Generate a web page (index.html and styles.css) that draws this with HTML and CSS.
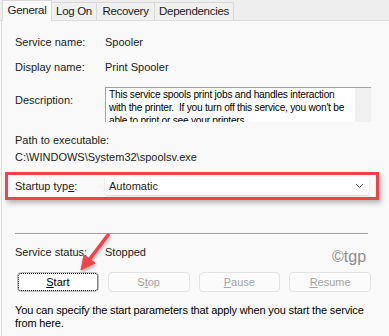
FILE: index.html
```html
<!DOCTYPE html>
<html lang="en">

<head>
    <meta charset="UTF-8">
    <meta name="viewport" content="width=device-width, initial-scale=1.0">
    <title>Print Spooler Properties</title>
    <link rel="stylesheet" href="styles.css">
</head>

<body>

    <div class="tabs">
        <div class="tab active">General</div>
        <div class="tab">Log On</div>
        <div class="tab">Recovery</div>
        <div class="tab">Dependencies</div>
    </div>

    <div class="panel">
        <div class="row first">
            <span class="label">Service name:</span>
            <span class="value">Spooler</span>
        </div>
        <div class="row gap">
            <span class="label">Display name:</span>
            <span class="value">Print Spooler</span>
        </div>
        <div class="row desc-row">
            <span class="label desc-label">Description:</span>
            <div class="desc-box">
                <div class="desc-text">This service spools print jobs and handles interaction with the printer.&nbsp; If you turn off this service, you won't be able to print or see your printers.</div>
                <div class="scroll"></div>
            </div>
        </div>
        <div class="path-label">Path to executable:</div>
        <div class="path-value">C:\WINDOWS\System32\spoolsv.exe</div>

        <div class="highlight">
            <span class="label">Startup typ<u>e</u>:</span>
            <div class="select">
                <span>Automatic</span>
                <svg class="chevron" width="9" height="6" viewBox="0 0 9 6">
                    <path d="M1 1 L4.5 4.5 L8 1" fill="none" stroke="#555" stroke-width="1"/>
                </svg>
            </div>
        </div>

        <div class="divider"></div>

        <div class="row status-row">
            <span class="label">Service status:</span>
            <span class="value">Stopped</span>
        </div>

        <div class="buttons">
            <button class="btn default"><u>S</u>tart</button>
            <button class="btn" disabled>S<u>t</u>op</button>
            <button class="btn" disabled><u>P</u>ause</button>
            <button class="btn" disabled><u>R</u>esume</button>
        </div>

        <p class="hint">You can specify the start parameters that apply when you start the service from here.</p>
    </div>

    <div class="watermark">©tgp</div>

    <svg class="arrow" width="389" height="336" viewBox="0 0 389 336">
        <g fill="#ee4449" stroke="#ee4449">
            <line x1="108" y1="235" x2="89" y2="260" stroke-width="3.5" stroke-linecap="round"/>
            <polygon points="81,270 95,263 84,255" stroke-width="1" stroke-linejoin="round"/>
        </g>
    </svg>

</body>

</html>
```

FILE: styles.css
```css
* {
    margin: 0;
    padding: 0;
    box-sizing: border-box;
}

body {
    background: #f9f9f9;
    color: #1b1b1b;
    font-family: 'Liberation Sans', Arial, sans-serif;
    font-size: 11px;
    line-height: 13px;
    width: 389px;
    height: 336px;
    overflow: hidden;
    position: relative;
}

.tabs {
    display: flex;
    align-items: flex-end;
    height: 21px;
    padding-left: 2px;
    background: #eeeeee;
    border-bottom: 1px solid #dcdcdc;
}

.tab {
    height: 18px;
    border: 1px solid #d9d9d9;
    border-bottom: none;
    border-left: none;
    background: #f0f0f0;
    font-size: 11.5px;
    letter-spacing: -0.3px;
    line-height: 17px;
    text-align: center;
    white-space: nowrap;
    color: #1b1b1b;
}

.tab:nth-child(2) { width: 45px; }
.tab:nth-child(3) { width: 58px; }
.tab:nth-child(4) { width: 79px; }

.tab.active {
    width: 50px;
    height: 21px;
    margin-bottom: -1px;
    background: #f9f9f9;
    border-left: 1px solid #d9d9d9;
    line-height: 18px;
    padding-bottom: 3px;
}

.panel {
    border-left: 1px solid #dedede;
    margin-left: 1px;
    padding: 0 18px 0 13px;
    height: 315px;
}

.row {
    display: flex;
    align-items: flex-start;
}

.row.first {
    padding-top: 15px;
}

.row.gap {
    margin-top: 12px;
}

.label {
    width: 90px;
    flex-shrink: 0;
}

.desc-row {
    margin-top: 13px;
}

.desc-label {
    margin-top: 7px;
}

.desc-box {
    flex: 1;
    height: 35px;
    display: flex;
    background: #ffffff;
    border-top: 1px solid #a0a0a0;
    border-left: 1px solid #a0a0a0;
    overflow: hidden;
}

.desc-text {
    flex: 1;
    padding: 0 1px 0 3px;
    font-size: 10.2px;
    letter-spacing: -0.25px;
    color: #000;
}

.scroll {
    width: 16px;
    flex-shrink: 0;
    background: #f0f0f0;
}

.path-label {
    margin-top: 12px;
}

.path-value {
    margin-top: 4px;
}

.highlight {
    display: flex;
    align-items: center;
    margin: 8px -8px 0 -10px;
    height: 28px;
    padding: 0 7px;
    border: 3px solid #ef4349;
    box-shadow: 2px 3px 5px rgba(0, 0, 0, 0.28);
}

.highlight .label {
    width: 90px;
}

.select {
    flex: 1;
    height: 18px;
    display: flex;
    align-items: center;
    justify-content: space-between;
    padding: 0 5px 0 4px;
    background: #ffffff;
    box-shadow: 0 1px 2px rgba(0, 0, 0, 0.15);
    border-radius: 2px;
}

.divider {
    margin-top: 33px;
    height: 1px;
    background: #a0a0a0;
    margin-right: 3px;
}

.status-row {
    margin-top: 12px;
}

.buttons {
    display: grid;
    grid-template-columns: repeat(4, 1fr);
    gap: 9px;
    margin-top: 13px;
    padding-left: 2px;
}

.btn {
    height: 20px;
    font-family: 'Liberation Sans', Arial, sans-serif;
    font-size: 11px;
    color: #a3a3a3;
    background: #fbfbfb;
    border: 1px solid #e3e3e3;
    border-radius: 4px;
}

.btn.default {
    color: #000;
    background: #ffffff;
    border: 1px solid #bdbdbd;
    outline: 1px dotted #000;
    outline-offset: -2px;
}

.hint {
    margin-top: 12px;
    margin-right: -8px;
    letter-spacing: -0.15px;
    color: #000;
}

.watermark {
    position: absolute;
    left: 332px;
    top: 248px;
    font-size: 16px;
    line-height: 18px;
    color: #8d8d8d;
}

.arrow {
    position: absolute;
    left: 0;
    top: 0;
    filter: drop-shadow(1px 2px 1.5px rgba(0, 0, 0, 0.3));
}
```
